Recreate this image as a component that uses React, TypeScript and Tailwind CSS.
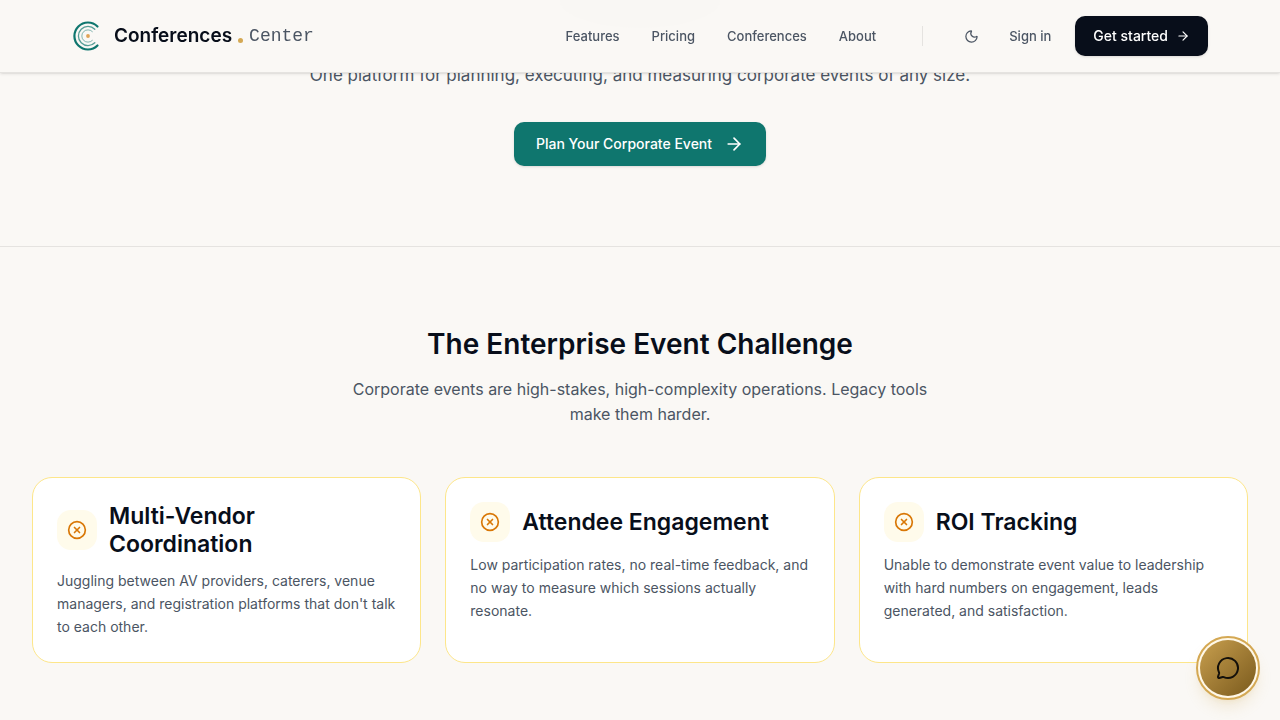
import { ArrowRight, CircleX, MessageCircle, Moon } from "lucide-react";

const navLinks = ["Features", "Pricing", "Conferences", "About"];

const challenges = [
  {
    title: "Multi-Vendor Coordination",
    text: "Juggling between AV providers, caterers, venue managers, and registration platforms that don't talk to each other.",
  },
  {
    title: "Attendee Engagement",
    text: "Low participation rates, no real-time feedback, and no way to measure which sessions actually resonate.",
  },
  {
    title: "ROI Tracking",
    text: "Unable to demonstrate event value to leadership with hard numbers on engagement, leads generated, and satisfaction.",
  },
];

function Logo() {
  return (
    <svg className="w-8 h-8 shrink-0" viewBox="0 0 32 32" fill="none" stroke="#0f766e" strokeLinecap="round">
      <path strokeWidth="2.2" d="M25.5 6.5A13.5 13.5 0 1 0 25.5 25.5" />
      <path strokeWidth="1.3" opacity="0.7" d="M22.8 9.2A9.6 9.6 0 1 0 22.8 22.8" />
      <path strokeWidth="1" opacity="0.5" d="M20.4 11.6A6.2 6.2 0 1 0 20.4 20.4" />
      <circle cx="16" cy="16" r="1.9" fill="#e0a458" stroke="none" />
    </svg>
  );
}

function Header() {
  return (
    <header className="fixed inset-x-0 top-0 z-40 bg-[#faf8f5] border-b border-[#e5e3e0] shadow-sm">
      {/* soft glow at the top centre of the bar */}
      <div className="absolute inset-x-0 top-0 h-7 flex justify-center overflow-hidden">
        <div className="w-40 h-14 -mt-7 rounded-[50%] bg-[#f9f7f4]" />
      </div>
      <div className="relative max-w-[1200px] mx-auto px-8 h-18 flex items-center justify-between">
        <a href="#" className="flex items-center gap-2.5">
          <Logo />
          <span className="flex items-center">
            <span className="text-[19px] font-semibold text-[#080e1a]">Conferences</span>
            <span className="w-[5px] h-[5px] mx-1.5 mt-2 rounded-full bg-[#d4a853]" />
            <span className="text-lg text-[#4b5563] font-['Liberation_Mono',monospace]">Center</span>
          </span>
        </a>
        <div className="flex items-center">
          <nav className="flex items-center gap-8 text-[13px] leading-[22px] font-medium text-[#4b5563]">
            {navLinks.map((link) => (
              <a key={link} href="#">{link}</a>
            ))}
          </nav>
          <div className="w-px h-5 ml-[46px] mr-8 bg-[#e5e3e0]" />
          <button type="button" aria-label="Toggle theme" className="w-8 h-8 flex items-center justify-center text-[#4b5563]">
            <Moon size={15} />
          </button>
          <a href="#" className="ml-[22px] text-[13px] leading-[22px] font-medium text-[#4b5563]">Sign in</a>
          <button type="button" className="ml-6 h-10 px-[18px] flex items-center gap-2 rounded-[10px] bg-[#080e1a] text-sm font-medium text-white shadow-sm">
            Get started
            <ArrowRight size={14} />
          </button>
        </div>
      </div>
    </header>
  );
}

export default function App() {
  return (
    <div className="min-h-screen bg-[#faf8f5] text-[#080e1a] font-['Inter',sans-serif]">
      <Header />
      <main>
        <section className="px-8 pt-[61px] pb-20 flex flex-col items-center border-b border-[#e5e3e0]">
          <p className="text-[17px] leading-[29px] text-center text-[#4b5563]">
            One platform for planning, executing, and measuring corporate events of any size.
          </p>
          <button type="button" className="mt-8 h-11 px-[22px] flex items-center gap-3 rounded-[10px] bg-[#0f766e] text-sm font-medium text-white shadow-sm">
            Plan Your Corporate Event
            <ArrowRight size={20} />
          </button>
        </section>

        <section className="px-8 pt-20 pb-14">
          <div className="max-w-[600px] mx-auto mb-[50px] text-center">
            <h2 className="mb-4 text-[28px] leading-[34px] font-semibold">The Enterprise Event Challenge</h2>
            <p className="leading-[25px] text-[#4b5563]">
              Corporate events are high-stakes, high-complexity operations. Legacy tools make them harder.
            </p>
          </div>
          <div className="grid grid-cols-3 gap-6">
            {challenges.map((item) => (
              <article key={item.title} className="p-6 rounded-[20px] bg-white border border-[#fde68a]">
                <div className="mb-[11px] flex items-center gap-3">
                  <span className="w-10 h-10 shrink-0 flex items-center justify-center rounded-[14px] bg-[#fffbeb] text-[#d97706]">
                    <CircleX size={20} />
                  </span>
                  <h3 className="text-[23px] leading-7 font-semibold">{item.title}</h3>
                </div>
                <p className="text-sm leading-[23px] text-[#4b5563]">{item.text}</p>
              </article>
            ))}
          </div>
        </section>
      </main>

      <button
        type="button"
        aria-label="Open chat"
        className="fixed bottom-5 right-5 z-50 w-16 h-16 flex items-center justify-center rounded-full border-2 border-[#d4a853] bg-[#fff8e8] shadow-lg shadow-[#d4a853]/20"
      >
        <span className="w-14 h-14 flex items-center justify-center rounded-full bg-linear-to-br from-[#c9a04f] to-[#7a5a1c] text-[#14100a]">
          <MessageCircle size={24} />
        </span>
      </button>
    </div>
  );
}
